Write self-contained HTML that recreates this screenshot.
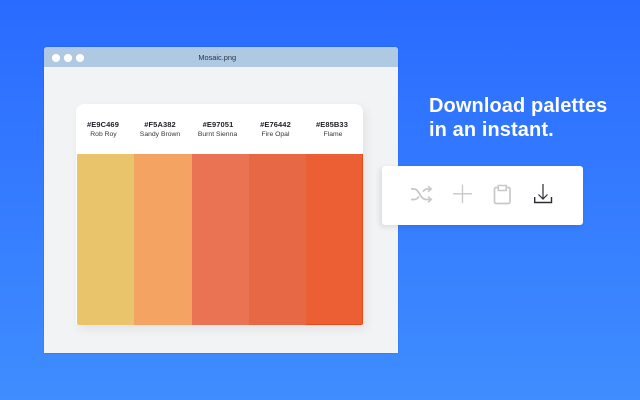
<!DOCTYPE html>
<html><head><meta charset="utf-8">
<style>
html,body{margin:0;padding:0}
body{width:640px;height:400px;overflow:hidden;position:relative;background:linear-gradient(180deg,#2a6bff 0%,#3f8dff 100%);font-family:"Liberation Sans",sans-serif}
div{position:absolute;box-sizing:border-box}
.win{left:44px;top:47px;width:353.5px;height:306px;background:#f2f3f5;border-radius:3px 3px 0 0;overflow:hidden;box-shadow:0 0 1px rgba(0,60,200,.6)}
.bar{left:0;top:0;width:100%;height:20px;background:#afc9e3}
.dot{top:7px;width:7.5px;height:7.5px;border-radius:50%;background:#fff}
.title{left:-3.5px;width:100%;top:6px;text-align:center;font-size:7.4px;line-height:10px;color:#2a3340}
.card{left:76px;top:104px;width:287px;height:221px;background:#fff;border-radius:8px 8px 2px 2px;box-shadow:3px 4px 10px rgba(0,0,0,.07)}
.sw{top:154px;height:171px}
.hex{top:120px;width:58px;text-align:center;font-size:7.5px;line-height:10px;font-weight:bold;color:#1d1f24;letter-spacing:.1px}
.nm{top:129.5px;width:70px;text-align:center;font-size:6.8px;line-height:10px;color:#33373d}
.panel{left:382px;top:166px;width:201px;height:59px;background:#fff;border-radius:3px;box-shadow:-2px 2px 6px rgba(0,0,0,.1)}
.h{left:429px;font-size:20px;line-height:26px;font-weight:bold;color:#fff;white-space:nowrap}
</style></head>
<body>
<div class="win">
  <div class="bar"></div>
  <div class="dot" style="left:8px"></div>
  <div class="dot" style="left:20px"></div>
  <div class="dot" style="left:32px"></div>
  <div class="title">Mosaic.png</div>
</div>
<div class="card"></div>
<div class="sw" style="left:77px;width:57px;background:#e9c46a;border-radius:0 0 0 2px"></div>
<div class="sw" style="left:134px;width:58px;background:#f4a363"></div>
<div class="sw" style="left:192px;width:57px;background:#ea7353"></div>
<div class="sw" style="left:249px;width:57px;background:#e66845"></div>
<div class="sw" style="left:306px;width:57px;background:#ec5e33;border-right:1px solid #f04a10;border-bottom:1px solid #f04a10;border-radius:0 0 2px 0"></div>

<div class="hex" style="left:74px">#E9C469</div>
<div class="nm" style="left:68.5px">Rob Roy</div>
<div class="hex" style="left:131px">#F5A382</div>
<div class="nm" style="left:125px">Sandy Brown</div>
<div class="hex" style="left:189px">#E97051</div>
<div class="nm" style="left:182.5px">Burnt Sienna</div>
<div class="hex" style="left:246.500px">#E76442</div>
<div class="nm" style="left:240.500px">Fire Opal</div>
<div class="hex" style="left:303px">#E85B33</div>
<div class="nm" style="left:298px">Flame</div>

<div class="h" style="top:93px;letter-spacing:.1px">Download palettes</div>
<div class="h" style="top:117px;letter-spacing:.1px">in an instant.</div>

<div class="panel"></div>
<svg style="position:absolute;left:0;top:0" width="640" height="400" viewBox="0 0 640 400" fill="none">
  <g stroke="#c8c8c8" stroke-width="1.800">
    <path d="M411 189h3c5.500 0 6 10.500 12 10.500h5"/>
    <path d="M411 199.500h3c2.500 0 3.800-1.300 5-3.200M423 191.800c1-1.700 2-2.800 4-2.800h4"/>
    <path d="M428 186.200l3.300 2.800-3.300 2.800M428 196.700l3.300 2.800-3.300 2.800" stroke-width="1.500"/>
    <path d="M462.500 184.500v18.500M453 193.800h19" stroke-width="1.300"/>
    <path d="M498 187.500h-2a1.500 1.500 0 0 0-1.500 1.500v13a1.500 1.500 0 0 0 1.500 1.500h12.500a1.500 1.500 0 0 0 1.500-1.500v-13a1.500 1.500 0 0 0-1.500-1.500h-2" stroke-width="1.700"/>
    <path d="M498.300 185.500h7.900v5h-7.900z" stroke-width="1.500"/>
  </g>
  <g stroke="#2b2d31" stroke-width="1.200">
    <path d="M543 184v15M538.500 194.500l4.500 4.500 4.500-4.500"/>
    <path d="M534.700 197v5.500h16.800v-5.500" stroke-width="1.400"/>
  </g>
</svg>
</body></html>
